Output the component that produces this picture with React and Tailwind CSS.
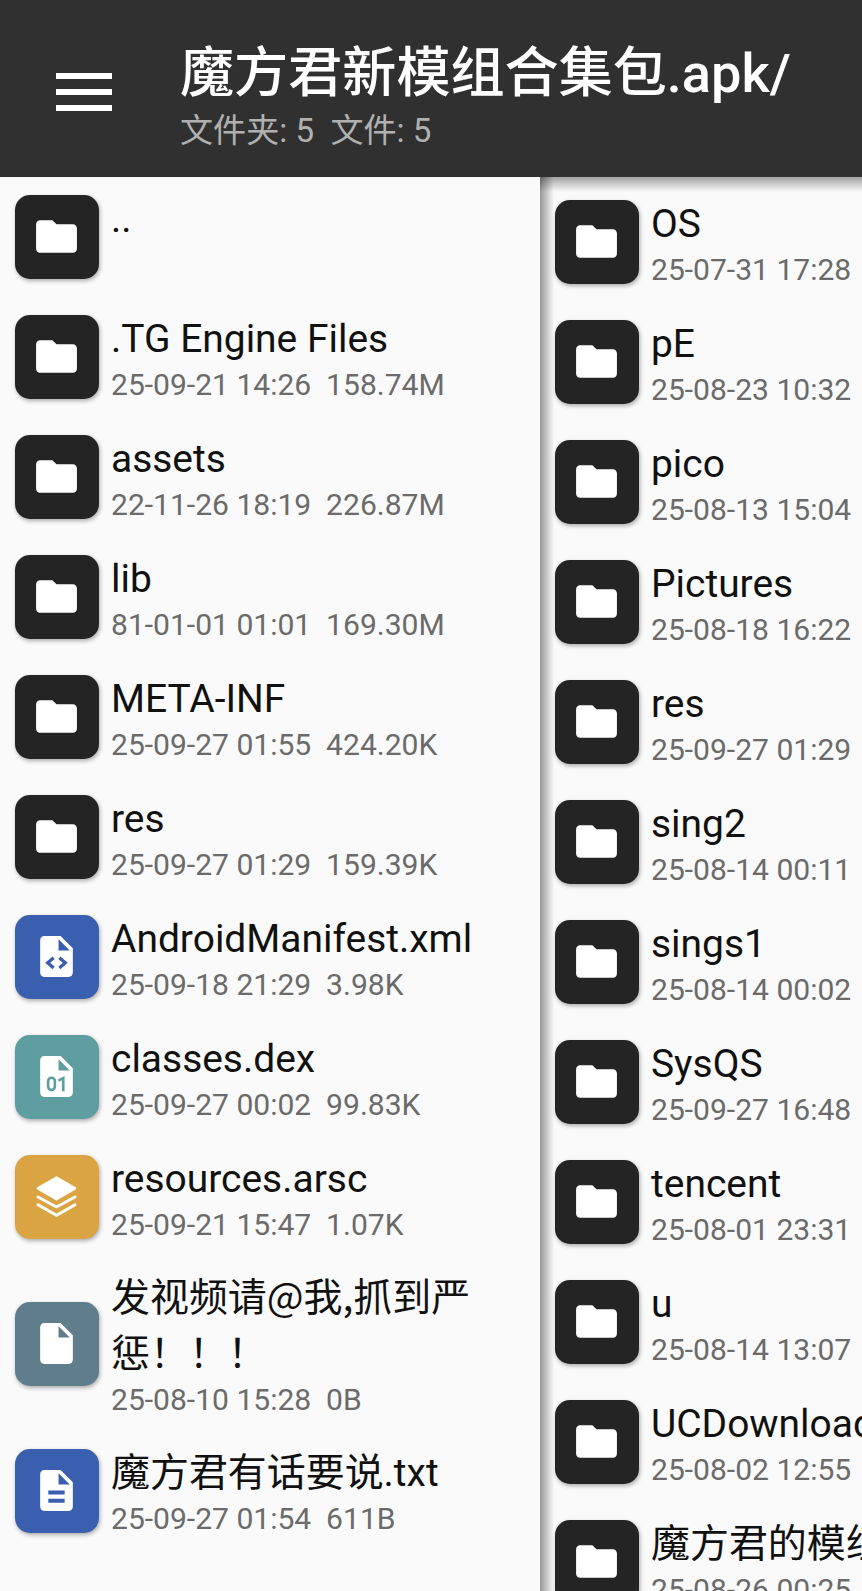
import React from "react";

const leftFiles = [
  { name: "..", meta: "", type: "folder" },
  { name: ".TG Engine Files", meta: "25-09-21 14:26  158.74M", type: "folder" },
  { name: "assets", meta: "22-11-26 18:19  226.87M", type: "folder" },
  { name: "lib", meta: "81-01-01 01:01  169.30M", type: "folder" },
  { name: "META-INF", meta: "25-09-27 01:55  424.20K", type: "folder" },
  { name: "res", meta: "25-09-27 01:29  159.39K", type: "folder" },
  { name: "AndroidManifest.xml", meta: "25-09-18 21:29  3.98K", type: "xml" },
  { name: "classes.dex", meta: "25-09-27 00:02  99.83K", type: "dex" },
  { name: "resources.arsc", meta: "25-09-21 15:47  1.07K", type: "arsc" },
  { name: "发视频请@我,抓到严惩！！！", meta: "25-08-10 15:28  0B", type: "file", tall: true },
  { name: "魔方君有话要说.txt", meta: "25-09-27 01:54  611B", type: "txt" },
];

const rightFiles = [
  { name: "OS", meta: "25-07-31 17:28", type: "folder" },
  { name: "pE", meta: "25-08-23 10:32", type: "folder" },
  { name: "pico", meta: "25-08-13 15:04", type: "folder" },
  { name: "Pictures", meta: "25-08-18 16:22", type: "folder" },
  { name: "res", meta: "25-09-27 01:29", type: "folder" },
  { name: "sing2", meta: "25-08-14 00:11", type: "folder" },
  { name: "sings1", meta: "25-08-14 00:02", type: "folder" },
  { name: "SysQS", meta: "25-09-27 16:48", type: "folder" },
  { name: "tencent", meta: "25-08-01 23:31", type: "folder" },
  { name: "u", meta: "25-08-14 13:07", type: "folder" },
  { name: "UCDownloads", meta: "25-08-02 12:55", type: "folder" },
  { name: "魔方君的模组", meta: "25-08-26 00:25", type: "folder" },
];

const tileColors = {
  folder: "bg-[#242424]",
  xml: "bg-[#395fae]",
  dex: "bg-[#5f9ea0]",
  arsc: "bg-[#d9a441]",
  file: "bg-[#607d8b]",
  txt: "bg-[#395fae]",
};

const Sheet = () => (
  <path
    fillRule="evenodd"
    d="M6 2C4.9 2 4 2.9 4 4V20C4 21.1 4.9 22 6 22H18C19.1 22 20 21.1 20 20V8L14 2H6ZM13 9V3.5L18.5 9H13Z"
  />
);

const Glyph = ({ type }) => {
  switch (type) {
    case "folder":
      return (
        <path d="M10 4H4c-1.1 0-2 .9-2 2v12c0 1.1.9 2 2 2h16c1.1 0 2-.9 2-2V8c0-1.1-.9-2-2-2h-8l-2-2z" />
      );
    case "xml":
      return (
        <>
          <Sheet />
          <path d="M10.6 12.6 7.7 15.1l2.9 2.5M13.4 12.6l2.9 2.5-2.9 2.5" fill="none" stroke="#395fae" strokeWidth="1.6" />
        </>
      );
    case "dex":
      return (
        <>
          <Sheet />
          <rect x="7.9" y="12.6" width="3.3" height="6" rx="1.65" fill="none" stroke="#5f9ea0" strokeWidth="1.3" />
          <path d="M12.9 14 15.3 12.8V19.2" fill="none" stroke="#5f9ea0" strokeWidth="1.3" />
        </>
      );
    case "arsc":
      return (
        <>
          <path
            d="M12 2.7 21.1 8 12 13.3 2.9 8Z"
            stroke="white"
            strokeWidth="1.2"
            strokeLinejoin="round"
          />
          <path
            d="M2.9 12.2 12 17.1 21.1 12.2M2.9 16.1 12 21.2 21.1 16.1"
            fill="none"
            stroke="white"
            strokeWidth="1.4"
            strokeLinecap="round"
          />
        </>
      );
    case "txt":
      return (
        <>
          <Sheet />
          <path d="M8 13h8M8 17h8" stroke="#395fae" strokeWidth="1.9" />
        </>
      );
    default:
      return <Sheet />;
  }
};

const FileRow = ({ file }) => (
  <li className={`flex items-center gap-3 pl-[15px] ${file.tall ? "h-[174px]" : "h-[120px]"}`}>
    <div
      className={`flex size-[84px] shrink-0 items-center justify-center rounded-[15px] pr-px pb-0.5 shadow-[1px_2px_4px_rgba(0,0,0,0.32)] ${tileColors[file.type]}`}
    >
      <svg viewBox="0 0 24 24" className="size-[49px]" fill="white">
        <Glyph type={file.type} />
      </svg>
    </div>
    <div className="min-w-0 flex-1">
      <div
        className={`text-[38.95px] leading-14 text-[#111] ${file.tall ? "-mt-[5px] mb-[5px] font-['Noto_Sans_CJK_SC',sans-serif]" : "-mt-px mb-px"}`}
      >
        {file.name}
      </div>
      <div className="h-[34px] text-[30.05px] leading-[34px] whitespace-pre text-[#6b6b6b]">{file.meta}</div>
    </div>
  </li>
);

const App = () => {
  return (
    <div className="flex h-[1591px] w-[862px] flex-col overflow-hidden bg-[#fafafa] font-['Roboto','Noto_Sans_CJK_SC',sans-serif]">
      <header className="flex h-[177px] shrink-0 bg-[#303030] pl-14">
        <button className="mt-[73px] flex h-[38px] w-14 flex-col justify-between">
          <span className="h-1.5 w-full bg-white" />
          <span className="h-1.5 w-full bg-white" />
          <span className="h-1.5 w-full bg-white" />
        </button>
        <div className="ml-[68px] pt-[42px]">
          <h1 className="text-[54.1px] leading-[64px] font-medium whitespace-nowrap text-white">
            魔方君新模组合集包.apk/
          </h1>
          <p className="mt-[3px] text-[33.1px] leading-[44px] whitespace-pre text-[#b0b0b0]">文件夹: 5  文件: 5</p>
        </div>
      </header>

      <main className="flex min-h-0 flex-1">
        <ul className="w-[540px] shrink-0 pr-[50px]">
          {leftFiles.map((file) => (
            <FileRow key={file.name} file={file} />
          ))}
        </ul>
        <section className="relative min-w-0 flex-1 overflow-hidden">
          <div className="absolute inset-x-0 top-0 h-[15px] bg-linear-to-b from-black/35 to-transparent" />
          <div className="absolute inset-y-0 left-0 w-[14px] bg-linear-to-r from-black/40 to-transparent" />
          <ul className="w-[540px] pt-[5px]">
            {rightFiles.map((file) => (
              <FileRow key={file.name} file={file} />
            ))}
          </ul>
        </section>
      </main>
    </div>
  );
};

export default App;
